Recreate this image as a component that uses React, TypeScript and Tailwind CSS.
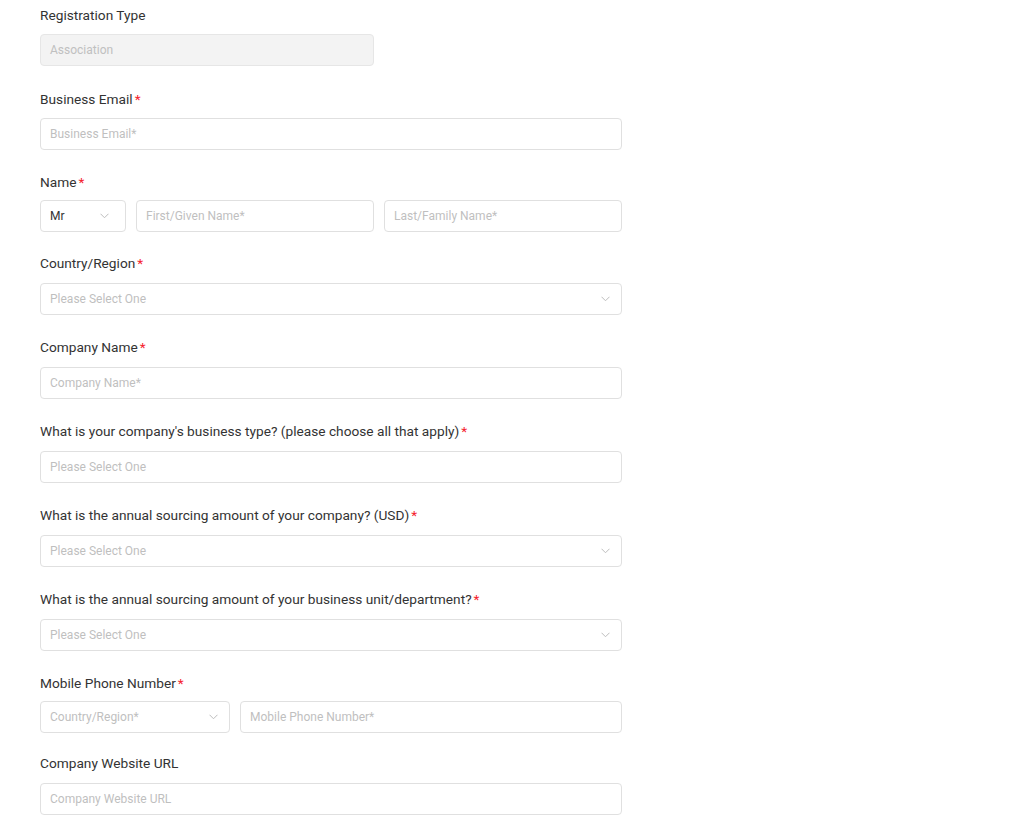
import React from 'react';

const Chevron = () => (
  <svg width="9" height="6" viewBox="0 0 9 6" fill="none" className="shrink-0">
    <path d="M0.5 0.75L4.5 4.75L8.5 0.75" stroke="#bdbdbd" strokeWidth="1" />
  </svg>
);

const Label = ({ text, required, gap = 'mb-[10px]' }: { text: string; required?: boolean; gap?: string }) => (
  <div className={`h-5 text-[13.7px] leading-5 text-[#333333] ${gap}`}>
    {text}
    {required && <span className="ml-[2px] text-[#f5222d]">*</span>}
  </div>
);

const Input = ({ placeholder, className = '' }: { placeholder: string; className?: string }) => (
  <input
    placeholder={placeholder}
    className={`h-8 rounded-[4px] border border-[#e0e0e0] bg-white px-[9px] text-[12px] text-[#333333] outline-none placeholder:text-[#bfbfbf] ${className}`}
  />
);

const Select = ({ text, muted = true, className = '', pr = 'pr-[11px]' }: { text: string; muted?: boolean; className?: string; pr?: string }) => (
  <div
    className={`flex h-8 items-center justify-between rounded-[4px] border border-[#e0e0e0] bg-white pl-[9px] ${pr} text-[12px] ${muted ? 'text-[#bfbfbf]' : 'text-[#333333]'} ${className}`}
  >
    <span>{text}</span>
    <Chevron />
  </div>
);

export default function App() {
  return (
    <div className="min-h-screen bg-white pl-10 pt-[5px]" style={{ fontFamily: 'Roboto, "Liberation Sans", sans-serif' }}>
      <div className="w-[582px]">
        <div className="mb-[23px]">
          <Label text="Registration Type" />
          <div className="-mt-px flex h-8 w-[334px] items-center rounded-[4px] border border-[#e6e6e6] bg-[#f3f3f3] px-[9px] text-[12px] text-[#c0c0c0]">
            Association
          </div>
        </div>

        <div className="mb-[22px]">
          <Label text="Business Email" required gap="mb-[9px]" />
          <Input placeholder="Business Email*" className="w-full" />
        </div>

        <div className="mb-[21px]">
          <Label text="Name" required gap="mb-[8px]" />
          <div className="flex gap-[10px]">
            <Select text="Mr" muted={false} className="w-[86px]" pr="pr-4" />
            <Input placeholder="First/Given Name*" className="w-[238px]" />
            <Input placeholder="Last/Family Name*" className="w-[238px]" />
          </div>
        </div>

        <div className="mb-[22px]">
          <Label text="Country/Region" required />
          <Select text="Please Select One" className="w-full" />
        </div>

        <div className="mb-[22px]">
          <Label text="Company Name" required />
          <Input placeholder="Company Name*" className="w-full" />
        </div>

        <div className="mb-[22px]">
          <Label text="What is your company's business type? (please choose all that apply)" required />
          <div className="flex h-8 w-full items-center rounded-[4px] border border-[#e0e0e0] bg-white px-[9px] text-[12px] text-[#bfbfbf]">
            Please Select One
          </div>
        </div>

        <div className="mb-[22px]">
          <Label text="What is the annual sourcing amount of your company? (USD)" required />
          <Select text="Please Select One" className="w-full" />
        </div>

        <div className="mb-[22px]">
          <Label text="What is the annual sourcing amount of your business unit/department?" required />
          <Select text="Please Select One" className="w-full" />
        </div>

        <div className="mb-[20px]">
          <Label text="Mobile Phone Number" required gap="mb-[8px]" />
          <div className="flex gap-[10px]">
            <Select text="Country/Region*" className="w-[190px]" />
            <Input placeholder="Mobile Phone Number*" className="w-[382px]" />
          </div>
        </div>

        <div>
          <Label text="Company Website URL" />
          <Input placeholder="Company Website URL" className="w-full" />
        </div>
      </div>
    </div>
  );
}
